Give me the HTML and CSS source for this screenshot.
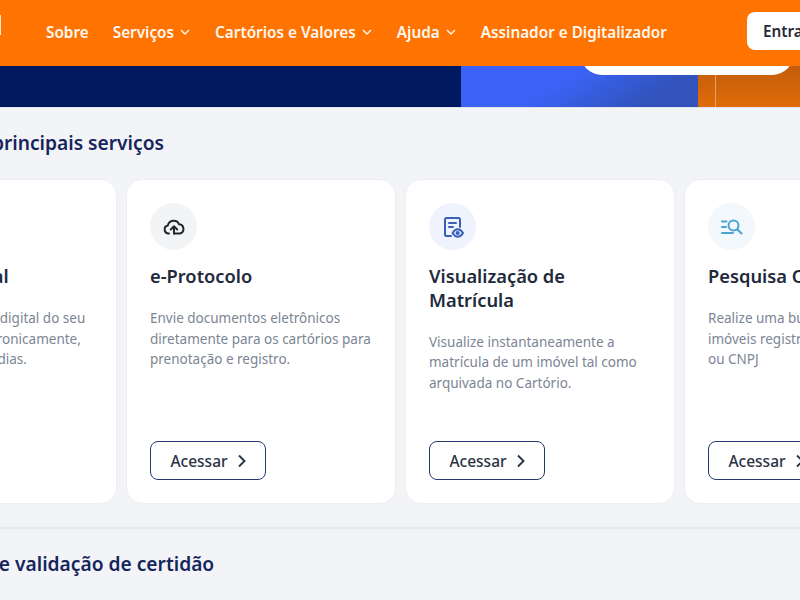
FILE: index.html
```html
<!DOCTYPE html>
<html lang="pt-BR">
<head>
<meta charset="utf-8">
<title>Serviços</title>
<link rel="stylesheet" href="styles.css">
</head>
<body>
<div class="page">
  <header class="topbar">
    <div class="logo"></div>
    <nav class="nav">
      <a class="nav-item">Sobre</a>
      <a class="nav-item">Serviços <svg class="chev" viewBox="0 0 12 8"><path d="M2 2l4 4 4-4"/></svg></a>
      <a class="nav-item">Cartórios e Valores <svg class="chev" viewBox="0 0 12 8"><path d="M2 2l4 4 4-4"/></svg></a>
      <a class="nav-item">Ajuda <svg class="chev" viewBox="0 0 12 8"><path d="M2 2l4 4 4-4"/></svg></a>
      <a class="nav-item">Assinador e Digitalizador</a>
    </nav>
    <button class="login">Entrar</button>
  </header>
  <section class="hero">
    <div class="hero-navy"></div>
    <div class="hero-blue"></div>
    <div class="hero-orange"><div class="hero-line"></div></div>
    <div class="hero-pill"></div>
  </section>
  <main class="content">
    <h2 class="section-title">Conheça os principais serviços</h2>
    <div class="cards">
      <article class="card">
        <div class="icon icon-gray"></div>
        <h3>Registro Digital</h3>
        <p>Solicite a averbação digital do seu imóvel ou título eletronicamente, de forma ágil, em 3 dias.</p>
        <button class="access">Acessar <svg class="arrow" viewBox="0 0 10 14"><path d="M2 1.5L7.5 7 2 12.5"/></svg></button>
      </article>
      <article class="card">
        <div class="icon icon-gray">
          <svg viewBox="0 0 24 24" class="glyph dark"><path d="M7 18.500H6.500a4 4 0 0 1-.7-7.900 6 6 0 0 1 11.400-1.300 4.700 4.700 0 0 1 .8 9.200H12"/><path d="M12 18.500V11.500M8.800 14.500l3.200-3.200 3.200 3.200"/></svg>
        </div>
        <h3>e-Protocolo</h3>
        <p>Envie documentos eletrônicos diretamente para os cartórios para prenotação e registro.</p>
        <button class="access">Acessar <svg class="arrow" viewBox="0 0 10 14"><path d="M2 1.5L7.5 7 2 12.5"/></svg></button>
      </article>
      <article class="card">
        <div class="icon icon-blue">
          <svg viewBox="0 0 24 24" class="glyph blue"><path d="M10 21H5.500A1.500 1.500 0 0 1 4 19.500V4.500A1.500 1.500 0 0 1 5.500 3h12A1.500 1.500 0 0 1 19 4.500V12"/><path d="M8 8h7M8 12h4"/><path d="M11.500 18c1.700-2.700 3.400-3.800 5.200-3.800s3.700 1.100 5.300 3.800c-1.600 2.700-3.500 3.800-5.300 3.800s-3.500-1.100-5.200-3.800z"/><circle cx="16.700" cy="18" r="1.100"/></svg>
        </div>
        <h3>Visualização de Matrícula</h3>
        <p>Visualize instantaneamente a matrícula de um imóvel tal como arquivada no Cartório.</p>
        <button class="access">Acessar <svg class="arrow" viewBox="0 0 10 14"><path d="M2 1.5L7.5 7 2 12.5"/></svg></button>
      </article>
      <article class="card">
        <div class="icon icon-sky">
          <svg viewBox="0 0 24 24" class="glyph sky"><path d="M2 6.500h4.500M2 12h4M2 18h11"/><circle cx="13.500" cy="10.500" r="5"/><path d="M17.500 14.500l4 4"/></svg>
        </div>
        <h3>Pesquisa Online</h3>
        <p>Realize uma busca online por seus imóveis registrados pelo seu CPF ou CNPJ</p>
        <button class="access">Acessar <svg class="arrow" viewBox="0 0 10 14"><path d="M2 1.5L7.5 7 2 12.5"/></svg></button>
      </article>
    </div>
    <hr class="divider">
    <h2 class="section-title lower">Verificação e validação de certidão</h2>
  </main>
</div>
</body>
</html>
```
FILE: styles.css
```css
* { box-sizing: border-box; }
html, body { margin: 0; padding: 0; width: 800px; height: 600px; overflow: hidden; background: #f3f4f7; }
body { font-family: "Noto Sans", "Open Sans", sans-serif; }
.page { width: 1260px; margin-left: -153px; }

.topbar { position: relative; z-index: 2; height: 66px; background: #ff7300; display: flex; align-items: center; }
.logo { width: 154px; height: 20px; margin-bottom: 16px; border-right: 1px solid #ffe9d6; flex: none; }
.nav { display: flex; align-items: center; gap: 24px; margin: 0 0 2px 45px; flex: none; }
.nav-item { color: #fff; font-size: 15.3px; font-weight: 600; line-height: 22px; display: flex; align-items: center; white-space: nowrap; opacity: .95; }
.chev { width: 12px; height: 8px; margin-left: 5px; fill: none; stroke: #fff; stroke-width: 1.4; }
.login { margin: 0 0 4px 80px; width: 120px; height: 38px; border: 0; border-radius: 8px; background: #fff; color: #1f2937; font: 600 15.3px "Noto Sans", sans-serif; text-align: left; padding: 0 16px; flex: none; }

.hero { position: relative; height: 42px; display: flex; border-bottom: 1px solid #dfe4ef; }
.hero-navy { width: 614px; background: #00185e; }
.hero-blue { width: 237px; background: linear-gradient(150deg, #3a63f6 42%, #3153bb 80%); }
.hero-orange { flex: 1; background: linear-gradient(180deg, #c25d0c, #e06c08); padding-left: 17px; }
.hero-line { width: 1px; height: 100%; background: #e6a06a; }
.hero-pill { position: absolute; left: 733px; top: -20px; width: 214px; height: 29px; background: #fff; border-radius: 0 0 22px 22px; }

.content { padding: 0; }
.section-title { margin: 0; color: #16255c; font-size: 19.2px; font-weight: 600; line-height: 28px; padding: 21px 0 0 33px; }
.cards { display: flex; gap: 9px; margin: 22px 0 0; }
.card { width: 270px; height: 325px; flex: none; background: #fff; border: 1px solid #eceef1; border-radius: 16px; padding: 23px; display: flex; flex-direction: column; }
.icon { width: 47px; height: 47px; border-radius: 50%; display: flex; align-items: center; justify-content: center; flex: none; }
.icon-gray { background: #f3f4f6; }
.icon-blue { background: #eef3fe; }
.icon-sky { background: #f2f8fc; }
.glyph { width: 24px; height: 24px; fill: none; stroke-width: 2; stroke-linecap: round; stroke-linejoin: round; }
.glyph.dark { stroke: #23262e; }
.glyph.blue { stroke: #3a5fb8; }
.glyph.sky { stroke: #4ba3cf; }
.card h3 { margin: 14px 0 0; color: #1f2a3c; font-size: 18.3px; font-weight: 600; line-height: 23.5px; }
.card p { margin: 20.5px 0 0; color: #7b8594; font-size: 13.5px; line-height: 20.5px; }
.access { margin-top: auto; width: 116px; height: 39px; background: #fff; border: 1px solid #23396f; border-radius: 8px; color: #2a3342; font: 500 15.5px "Noto Sans", sans-serif; display: flex; align-items: center; justify-content: center; gap: 9px; padding: 0 0 0 1px; }
.arrow { width: 10px; height: 14px; fill: none; stroke: #2a3342; stroke-width: 1.9; }
.divider { border: 0; border-top: 2px solid #e6e8eb; margin: 23px 0 0; }
.lower { padding-left: 44px; }
```
